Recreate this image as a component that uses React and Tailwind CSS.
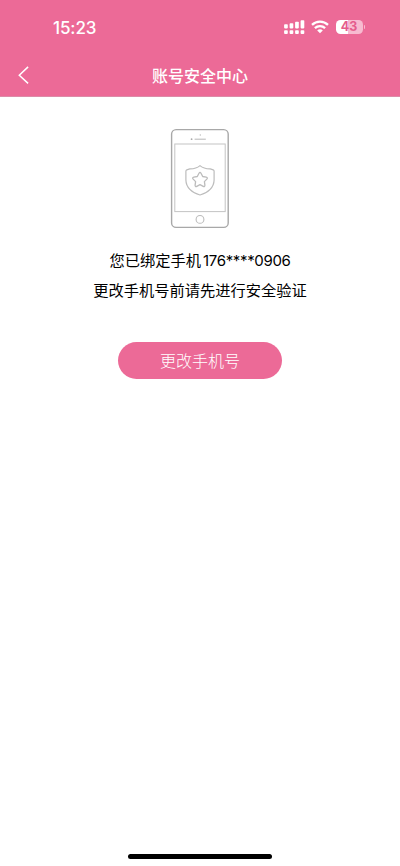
function SignalIcon() {
  return (
    <svg width="21" height="16" viewBox="0 0 21 16" fill="#fff">
      <rect x="0.1" y="5.2" width="3.7" height="4.2" rx="0.8" />
      <rect x="5.6" y="4.2" width="3.7" height="5.2" rx="0.8" />
      <rect x="11.1" y="2.8" width="3.7" height="6.6" rx="0.8" />
      <rect x="16.6" y="1.2" width="3.7" height="8.2" rx="0.8" />
      <rect x="0.1" y="11.2" width="3.7" height="3.7" rx="0.9" />
      <rect x="5.6" y="11.2" width="3.7" height="3.7" rx="0.9" />
      <rect x="11.1" y="11.2" width="3.7" height="3.7" rx="0.9" />
      <rect x="16.6" y="11.2" width="3.7" height="3.7" rx="0.9" />
    </svg>
  );
}

function WifiIcon() {
  return (
    <svg width="18" height="14" viewBox="0 0 18 14" fill="none" stroke="#fff" strokeWidth="2.3">
      <path d="M1 4.9C5.5 0.6 12.5 0.6 17 4.9" />
      <path d="M3.9 8.1C6.8 5.4 11.2 5.4 14.1 8.1" />
      <path d="M6.2 10.4C7.8 8.9 10.2 8.9 11.8 10.4L9 13.2Z" fill="#fff" stroke="none" />
    </svg>
  );
}

function PhoneShield() {
  return (
    <svg width="60" height="101" viewBox="0 0 60 101" fill="none" stroke="#bcbcbc">
      <rect x="1.6" y="1.6" width="56.6" height="97.8" rx="4.5" stroke="#a8a8a8" strokeWidth="1.4" />
      <rect x="4.8" y="16" width="50.4" height="67.6" stroke="#c4c4c4" />
      <path d="M24.6 11.2H35.8" strokeWidth="1.1" />
      <circle cx="30.3" cy="7" r="0.7" fill="#bbb" stroke="none" />
      <circle cx="21.6" cy="11.2" r="0.9" fill="#aaa" stroke="none" />
      <circle cx="30" cy="91.4" r="3.9" strokeWidth="1.1" />
      <path
        d="M30 37.6C32.6 39.8 36.2 41 40.2 40.9L43.2 41.9Q44.1 42.2 44.1 43.2V52C44 59.2 38.3 65 30 67C21.7 65 16 59.2 15.9 52V43.2Q15.9 42.2 16.8 41.9L19.8 40.9C23.8 41 27.4 39.8 30 37.6Z"
        strokeWidth="1.2"
        strokeLinejoin="round"
      />
      <path
        d="M29 45.2Q30 43.4 31 45.2L32.7 48.5L36.2 49.1Q38.1 49.6 36.8 51.1L34.4 53.6L34.9 57.1Q35 59 33.2 58.3L30 56.7L26.8 58.3Q25 59 25.1 57.1L25.6 53.6L23.2 51.1Q21.9 49.6 23.8 49.1L27.3 48.5Z"
        strokeWidth="1.3"
        strokeLinejoin="round"
      />
    </svg>
  );
}

export default function App() {
  return (
    <div className="flex h-[866px] w-[400px] flex-col bg-white font-['Inter','Noto_Sans_CJK_SC',sans-serif] text-black">
      <header className="flex h-[97px] flex-col border-b border-[#dc8ba8] bg-[#ec6a97] text-white">
        <div className="flex h-[54px] items-center justify-between pl-[53px] pr-[35px]">
          <span className="pt-px text-[17px] leading-5 font-medium tracking-[-0.1px]">15:23</span>
          <div className="flex items-center">
            <SignalIcon />
            <div className="ml-[6px]">
              <WifiIcon />
            </div>
            <div className="ml-[7px] flex h-[14px] w-[27px] items-center justify-center rounded-[4.5px] bg-[linear-gradient(90deg,#fff_44%,#f7bad0_44%)] pt-px text-[12.5px] leading-none font-bold text-[#e55c8c]">
              43
            </div>
            <div className="ml-px h-[4px] w-[1.5px] rounded-r-full bg-[#f7bad0]" />
          </div>
        </div>
        <div className="grid h-[42px] grid-cols-[60px_1fr_60px] items-center">
          <svg className="ml-[18px]" width="12" height="18" viewBox="0 0 12 18" fill="none" stroke="#fff" strokeWidth="1.5">
            <path d="M10.1 0.9L1.3 9.3L10.1 17.4" />
          </svg>
          <h1 className="pt-px text-center text-[16px] leading-6 font-medium">账号安全中心</h1>
        </div>
      </header>

      <main className="flex flex-1 flex-col items-center pt-[31px]">
        <PhoneShield />
        <div className="mt-[17px] text-center text-[15.25px] leading-[30px]">
          <p>
            您已绑定手机<span className="ml-[2px] text-[15px] tracking-[-0.35px]">176****0906</span>
          </p>
          <p>更改手机号前请先进行安全验证</p>
        </div>
        <button className="mt-[36px] h-[37px] w-[164px] rounded-full bg-[#ec6a97] text-[16px] leading-[38px] font-light text-white">
          更改手机号
        </button>
      </main>

      <div className="flex justify-center pb-[7px]">
        <div className="h-[5px] w-[144px] rounded-full bg-black" />
      </div>
    </div>
  );
}
